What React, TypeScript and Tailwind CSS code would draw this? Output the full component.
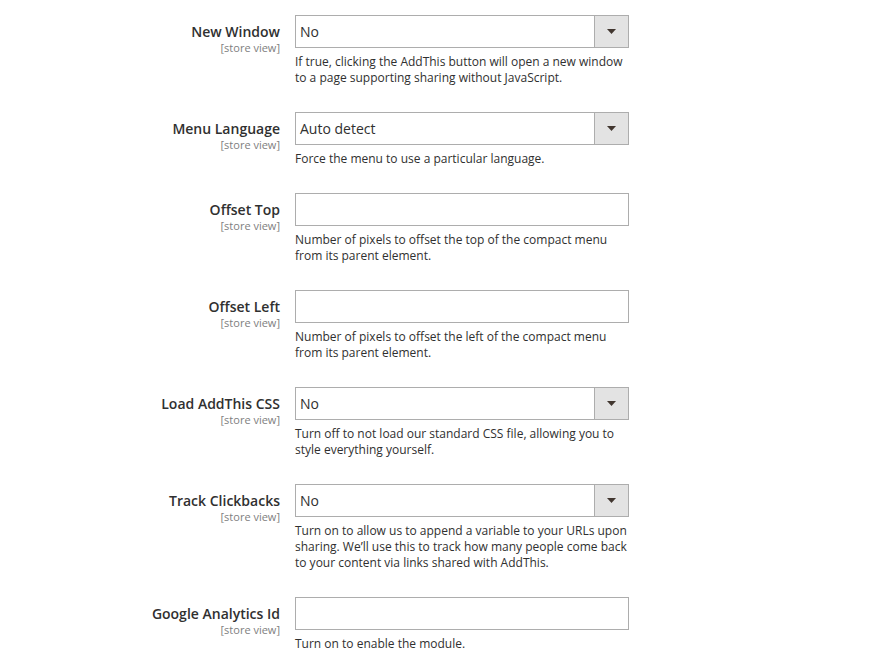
type Field = {
  label: string;
  kind: "select" | "text";
  value?: string;
  note: string[];
};

const fields: Field[] = [
  {
    label: "New Window",
    kind: "select",
    value: "No",
    note: [
      "If true, clicking the AddThis button will open a new window",
      "to a page supporting sharing without JavaScript.",
    ],
  },
  {
    label: "Menu Language",
    kind: "select",
    value: "Auto detect",
    note: ["Force the menu to use a particular language."],
  },
  {
    label: "Offset Top",
    kind: "text",
    note: [
      "Number of pixels to offset the top of the compact menu",
      "from its parent element.",
    ],
  },
  {
    label: "Offset Left",
    kind: "text",
    note: [
      "Number of pixels to offset the left of the compact menu",
      "from its parent element.",
    ],
  },
  {
    label: "Load AddThis CSS",
    kind: "select",
    value: "No",
    note: [
      "Turn off to not load our standard CSS file, allowing you to",
      "style everything yourself.",
    ],
  },
  {
    label: "Track Clickbacks",
    kind: "select",
    value: "No",
    note: [
      "Turn on to allow us to append a variable to your URLs upon",
      "sharing. We\u2019ll use this to track how many people come back",
      "to your content via links shared with AddThis.",
    ],
  },
  {
    label: "Google Analytics Id",
    kind: "text",
    note: ["Turn on to enable the module."],
  },
];

function SelectBox({ value }: { value: string }) {
  return (
    <div className="flex h-[33px] w-[334px] border border-[#adadad] bg-white">
      <div className="flex flex-1 items-center pl-[4px] text-[14px] text-[#303030]">
        {value}
      </div>
      <div className="flex w-[34px] items-center justify-center border-l border-[#adadad] bg-[#e3e3e3]">
        <svg width="9" height="5" viewBox="0 0 9 5">
          <path d="M0 0h9L4.5 5z" fill="#41362f" />
        </svg>
      </div>
    </div>
  );
}

function TextBox() {
  return <div className="h-[33px] w-[334px] border border-[#adadad] bg-white" />;
}

export default function App() {
  return (
    <div
      className="min-h-screen bg-white pt-[15px]"
      style={{ fontFamily: '"Open Sans", "Noto Sans", sans-serif' }}
    >
      <div className="flex flex-col gap-[26px]">
        {fields.map((f) => (
          <div key={f.label} className="flex">
            <div className="w-[280px] shrink-0 pt-[7px] text-right">
              <div className="text-[14px] font-semibold leading-[19px] text-[#303030]">
                {f.label}
              </div>
              <div className="text-[11px] leading-[14px] text-[#808080]">
                [store view]
              </div>
            </div>
            <div className="ml-[15px]">
              {f.kind === "select" ? <SelectBox value={f.value ?? ""} /> : <TextBox />}
              <div className="mt-[6px] text-[12px] leading-[16px] text-[#303030]">
                {f.note.map((line) => (
                  <div key={line}>{line}</div>
                ))}
              </div>
            </div>
          </div>
        ))}
      </div>
    </div>
  );
}
